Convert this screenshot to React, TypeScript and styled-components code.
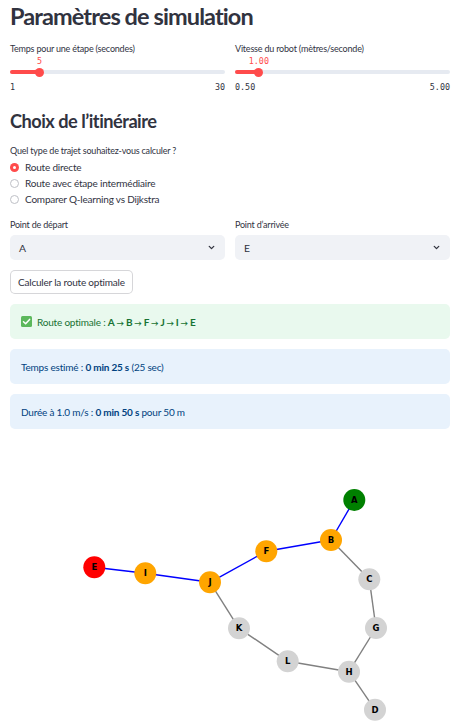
import React from "react";
import styled, { createGlobalStyle } from "styled-components";

const Global = createGlobalStyle`
  html, body { margin: 0; padding: 0; background: #fff; }
  body { font-family: Lato, "Noto Sans", sans-serif; color: rgb(49, 51, 63); }
  * { box-sizing: border-box; }
`;

const Page = styled.div`
  width: 474px;
  padding: 0 24px 0 10px;
  display: flex;
  flex-direction: column;
`;

const Title = styled.h2`
  margin: 0;
  font-size: 23.5px;
  line-height: 33px;
  letter-spacing: -0.9px;
  font-weight: 700;
  color: rgb(49, 51, 63);
`;

const SubTitle = styled.h3`
  margin: 15px 0 0;
  font-size: 18.2px;
  line-height: 26px;
  letter-spacing: -0.5px;
  font-weight: 700;
  color: rgb(49, 51, 63);
`;

const Columns = styled.div<{ $top: number }>`
  display: grid;
  grid-template-columns: 1fr 1fr;
  column-gap: 10px;
  margin-top: ${(p) => p.$top}px;
`;

const WidgetLabel = styled.div`
  font-size: 9px;
  line-height: 14px;
  letter-spacing: -0.2px;
  color: rgb(49, 51, 63);
`;

const SliderBody = styled.div`
  position: relative;
  height: 25px;
`;

const Track = styled.div`
  position: absolute;
  left: 0;
  right: 0;
  top: 14px;
  height: 4px;
  border-radius: 2px;
  background: rgb(230, 234, 241);
`;

const Fill = styled.div`
  height: 100%;
  border-radius: 2px;
  background: rgb(255, 75, 75);
`;

const Thumb = styled.div`
  position: absolute;
  top: 11.5px;
  width: 9px;
  height: 9px;
  margin-left: -4.5px;
  border-radius: 50%;
  background: rgb(255, 75, 75);
`;

const ThumbValue = styled.div`
  position: absolute;
  top: 0;
  transform: translateX(-50%);
  font-family: "DejaVu Sans Mono", "Liberation Mono", monospace;
  font-size: 8.4px;
  line-height: 10px;
  color: rgb(255, 75, 75);
  white-space: nowrap;
`;

const TickRow = styled.div`
  display: flex;
  justify-content: space-between;
  font-family: "DejaVu Sans Mono", "Liberation Mono", monospace;
  font-size: 8.4px;
  line-height: 12px;
  color: rgb(49, 51, 63);
`;

type SliderProps = { label: string; min: number; max: number; value: number; fmt: (n: number) => string };

const Slider = ({ label, min, max, value, fmt }: SliderProps) => {
  const pct = ((value - min) / (max - min)) * 100;
  return (
    <div>
      <WidgetLabel>{label}</WidgetLabel>
      <SliderBody>
        <Track>
          <Fill style={{ width: `${pct}%` }} />
        </Track>
        <Thumb style={{ left: `${pct}%` }} />
        <ThumbValue style={{ left: `${pct}%` }}>{fmt(value)}</ThumbValue>
      </SliderBody>
      <TickRow>
        <span>{fmt(min)}</span>
        <span>{fmt(max)}</span>
      </TickRow>
    </div>
  );
};

const RadioLabel = styled(WidgetLabel)`
  margin-top: 10px;
`;

const RadioGroup = styled.div`
  display: flex;
  flex-direction: column;
  margin-top: 1px;
`;

const RadioRow = styled.div`
  display: flex;
  align-items: center;
  height: 16px;
  gap: 6px;
  font-size: 10px;
  letter-spacing: -0.2px;
  color: rgb(49, 51, 63);
`;

const RadioDot = styled.span<{ $on: boolean }>`
  width: 9px;
  height: 9px;
  border-radius: 50%;
  flex: none;
  background: ${(p) => (p.$on ? "rgb(255, 75, 75)" : "#fff")};
  border: ${(p) => (p.$on ? "none" : "1px solid rgb(190, 192, 198)")};
  display: flex;
  align-items: center;
  justify-content: center;
  &::after {
    content: "";
    display: ${(p) => (p.$on ? "block" : "none")};
    width: 3px;
    height: 3px;
    border-radius: 50%;
    background: #fff;
  }
`;

const SelectBox = styled.div`
  margin-top: 3px;
  height: 25px;
  border-radius: 5px;
  background: rgb(240, 242, 246);
  display: flex;
  align-items: center;
  justify-content: space-between;
  padding: 0 9px;
  font-size: 10.4px;
  color: rgb(49, 51, 63);
`;

const Button = styled.button`
  align-self: flex-start;
  margin-top: 10px;
  height: 24px;
  padding: 0 7px;
  background: #fff;
  border: 1px solid rgba(49, 51, 63, 0.2);
  border-radius: 5px;
  font-family: inherit;
  font-size: 10px;
  letter-spacing: -0.2px;
  color: rgb(49, 51, 63);
`;

const Alert = styled.div<{ $kind: "success" | "info" }>`
  margin-top: 10px;
  height: 35px;
  border-radius: 5px;
  display: flex;
  align-items: center;
  gap: 5px;
  padding: 0 11px;
  font-size: 10px;
  letter-spacing: -0.2px;
  background: ${(p) => (p.$kind === "success" ? "rgb(233, 249, 238)" : "rgb(232, 242, 252)")};
  color: ${(p) => (p.$kind === "success" ? "rgb(23, 114, 51)" : "rgb(0, 66, 128)")};
  b { font-weight: 700; }
`;

const Arrow = styled.span`
  font-size: 7.5px;
  margin: 0 2px;
`;

const GraphWrap = styled.div`
  margin-top: 10px;
  height: 285px;
`;

const Chevron = () => (
  <svg width="9" height="9" viewBox="0 0 24 24" fill="none" stroke="rgb(49,51,63)" strokeWidth="3.5" strokeLinecap="round" strokeLinejoin="round">
    <polyline points="6 9 12 15 18 9" />
  </svg>
);

const CheckIcon = () => (
  <svg width="11" height="11" viewBox="0 0 11 11">
    <rect x="0" y="0" width="11" height="11" rx="1.5" fill="rgb(92, 184, 92)" />
    <polyline points="2.5,5.8 4.6,7.8 8.6,3.4" fill="none" stroke="#fff" strokeWidth="1.5" strokeLinecap="round" strokeLinejoin="round" />
  </svg>
);

type Node = { id: string; x: number; y: number; color: string };
const OX = 10;
const OY = 440;
const nodes: Node[] = [
  { id: "A", x: 354.3, y: 501, color: "rgb(0,128,0)" },
  { id: "B", x: 331, y: 541, color: "rgb(255,165,0)" },
  { id: "C", x: 369.3, y: 580.3, color: "rgb(211,211,211)" },
  { id: "G", x: 376, y: 629, color: "rgb(211,211,211)" },
  { id: "H", x: 349, y: 672.7, color: "rgb(211,211,211)" },
  { id: "D", x: 375, y: 710.7, color: "rgb(211,211,211)" },
  { id: "L", x: 287.7, y: 662.3, color: "rgb(211,211,211)" },
  { id: "K", x: 239, y: 629.3, color: "rgb(211,211,211)" },
  { id: "F", x: 266.3, y: 552.3, color: "rgb(255,165,0)" },
  { id: "J", x: 210, y: 583.3, color: "rgb(255,165,0)" },
  { id: "I", x: 145.3, y: 574.3, color: "rgb(255,165,0)" },
  { id: "E", x: 94.3, y: 568.3, color: "rgb(255,0,0)" },
];
const edges: [string, string, boolean][] = [
  ["A", "B", true],
  ["B", "F", true],
  ["F", "J", true],
  ["J", "I", true],
  ["I", "E", true],
  ["B", "C", false],
  ["C", "G", false],
  ["G", "H", false],
  ["H", "D", false],
  ["H", "L", false],
  ["L", "K", false],
  ["K", "J", false],
];

const Graph = () => {
  const pos = Object.fromEntries(nodes.map((n) => [n.id, n]));
  return (
    <svg width="440" height="285" viewBox={`${OX} ${OY} 440 285`}>
      {edges.map(([a, b, on]) => (
        <line
          key={a + b}
          x1={pos[a].x}
          y1={pos[a].y}
          x2={pos[b].x}
          y2={pos[b].y}
          stroke={on ? "rgb(0,0,255)" : "rgb(128,128,128)"}
          strokeWidth={1.4}
        />
      ))}
      {nodes.map((n) => (
        <g key={n.id}>
          <circle cx={n.x} cy={n.y} r={11} fill={n.color} />
          <text
            x={n.x}
            y={n.y}
            textAnchor="middle"
            dominantBaseline="central"
            fontFamily="'DejaVu Sans', sans-serif"
            fontWeight="bold"
            fontSize="8.5"
            fill="#000"
          >
            {n.id}
          </text>
        </g>
      ))}
    </svg>
  );
};

const route = ["A", "B", "F", "J", "I", "E"];

export default function App() {
  return (
    <Page>
      <Global />
      <Title>Paramètres de simulation</Title>
      <Columns $top={9}>
        <Slider label="Temps pour une étape (secondes)" min={1} max={30} value={5} fmt={(n) => String(n)} />
        <Slider label="Vitesse du robot (mètres/seconde)" min={0.5} max={5} value={1} fmt={(n) => n.toFixed(2)} />
      </Columns>
      <SubTitle>Choix de l’itinéraire</SubTitle>
      <RadioLabel>Quel type de trajet souhaitez-vous calculer ?</RadioLabel>
      <RadioGroup>
        <RadioRow><RadioDot $on={true} />Route directe</RadioRow>
        <RadioRow><RadioDot $on={false} />Route avec étape intermédiaire</RadioRow>
        <RadioRow><RadioDot $on={false} />Comparer Q-learning vs Dijkstra</RadioRow>
      </RadioGroup>
      <Columns $top={11}>
        <div>
          <WidgetLabel>Point de départ</WidgetLabel>
          <SelectBox><span>A</span><Chevron /></SelectBox>
        </div>
        <div>
          <WidgetLabel>Point d’arrivée</WidgetLabel>
          <SelectBox><span>E</span><Chevron /></SelectBox>
        </div>
      </Columns>
      <Button>Calculer la route optimale</Button>
      <Alert $kind="success">
        <CheckIcon />
        <span>
          Route optimale :{" "}
          <b>
            {route.map((r, i) => (
              <React.Fragment key={r}>
                {i > 0 && <Arrow>→</Arrow>}
                {r}
              </React.Fragment>
            ))}
          </b>
        </span>
      </Alert>
      <Alert $kind="info">
        <span>Temps estimé : <b>0 min 25 s</b> (25 sec)</span>
      </Alert>
      <Alert $kind="info">
        <span>Durée à 1.0 m/s : <b>0 min 50 s</b> pour 50 m</span>
      </Alert>
      <GraphWrap>
        <Graph />
      </GraphWrap>
    </Page>
  );
}
